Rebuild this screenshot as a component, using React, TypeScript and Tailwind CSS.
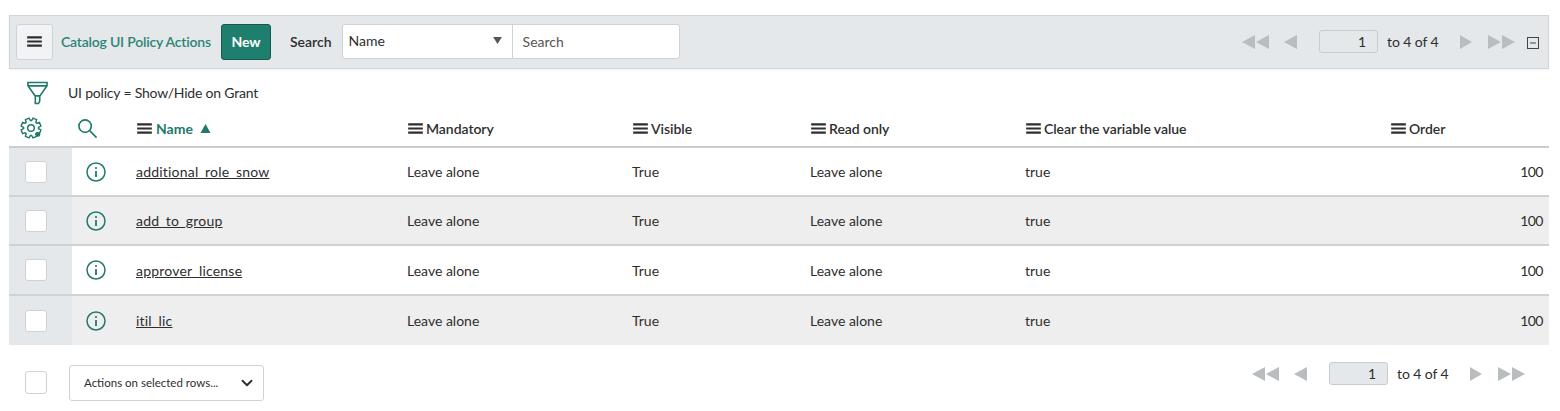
import React from 'react';
import { ChevronDown } from 'lucide-react';

const GRID = 'grid grid-cols-[63px_64px_271px_225px_178px_215px_365px_1fr]';
const GREEN = '#1f7a6b';

const rows = [
  { name: 'additional_role_snow', alt: false, height: 'h-[49px]' },
  { name: 'add_to_group', alt: true, height: 'h-[49px]' },
  { name: 'approver_license', alt: false, height: 'h-[50px]' },
  { name: 'itil_lic', alt: true, height: 'h-[49px]' },
];

// 8 toothed gear outline for the list settings icon
const gearPath = (() => {
  const pts: string[] = [];
  for (let i = 0; i < 8; i++) {
    const a = (i * Math.PI) / 4 - Math.PI / 8;
    [
      [8.2, -0.3],
      [11, -0.2],
      [11, 0.2],
      [8.2, 0.3],
    ].forEach(([r, d]) => {
      const x = 12 + r * Math.cos(a + d);
      const y = 12 + r * Math.sin(a + d);
      pts.push(`${x.toFixed(2)} ${y.toFixed(2)}`);
    });
  }
  return `M${pts.join('L')}Z`;
})();

const Menu = ({ className = '' }: { className?: string }) => (
  <svg viewBox="0 0 16 12" className={className} fill="none" stroke="#2e2e2e" strokeWidth="2.4">
    <path d="M0 1.5h16M0 6h16M0 10.5h16" />
  </svg>
);

const Pager = ({ inputBg, lastGap }: { inputBg: string; lastGap: string }) => (
  <div className="flex items-center">
    <svg viewBox="0 0 28 14" className="w-[28px] h-[14px]" fill="#b9bdbf">
      <path d="M0 7l13-7v14zM14 7l13-7v14z" />
    </svg>
    <svg viewBox="0 0 14 14" className="w-[14px] h-[14px] ml-[14px]" fill="#b9bdbf">
      <path d="M0 7l13-7v14z" />
    </svg>
    <div className={`ml-[21px] w-[59px] h-[23px] rounded-[3px] border border-[#c8ccce] text-right pr-[11px] leading-[21px] text-[14px] text-[#2e2e2e] ${inputBg}`}>
      1
    </div>
    <span className="ml-[9px] text-[14px] text-[#2e2e2e] w-[72px] tracking-[-0.1px]">to 4 of 4</span>
    <svg viewBox="0 0 14 14" className="w-[14px] h-[14px]" fill="#b9bdbf">
      <path d="M1 0l12 7-12 7z" />
    </svg>
    <svg viewBox="0 0 28 14" className={`w-[28px] h-[14px] ${lastGap}`} fill="#b9bdbf">
      <path d="M0 0l13 7-13 7zM14 0l13 7-13 7z" />
    </svg>
  </div>
);

const HeaderCell = ({ label }: { label: string }) => (
  <div className="flex items-center gap-[3px] pl-[1px] text-[14px] font-semibold text-[#2e2e2e] tracking-[-0.05px]">
    <Menu className="w-[15px] h-[11px]" />
    <span>{label}</span>
  </div>
);

export default function App() {
  return (
    <div className="w-[1560px] h-[411px] bg-white overflow-hidden pt-[15px] px-[9px] font-['Lato','Noto_Sans',sans-serif] text-[#2e2e2e]">
      <div className="w-[1540px]">
        {/* top bar */}
        <div className="h-[54px] bg-[#e4e8eb] border border-[#d2d5d7] shadow-[0_1px_2px_rgba(0,0,0,0.06)] flex items-center pl-[6px] pr-[9px] pb-[1px]">
          <button className="w-[37px] h-[36px] bg-[#f2f3f4] border border-[#cfd3d5] rounded-[3px] flex items-center justify-center">
            <Menu className="w-[15px] h-[11px]" />
          </button>
          <span className="ml-[8px] text-[14px] font-semibold text-[#2b8574] w-[152px] whitespace-nowrap tracking-[-0.2px]">
            Catalog UI Policy Actions
          </span>
          <button className="ml-[8px] w-[50px] h-[36px] bg-[#1f7f6e] border border-[#17594e] rounded-[3px] text-white text-[14px] font-bold">
            New
          </button>
          <span className="ml-[19px] text-[14px] font-semibold">Search</span>
          <div className="ml-[10px] mb-[1px] flex h-[35px] w-[338px] bg-white border border-[#cfd3d5] rounded-[3px]">
            <div className="w-[170px] border-r border-[#cfd3d5] flex items-center justify-between pl-[6px] pr-[10px] text-[14px] pb-[2px]">
              <span>Name</span>
              <svg viewBox="0 0 10 8" className="w-[9px] h-[7px]" fill="#555">
                <path d="M0 0h10L5 8z" />
              </svg>
            </div>
            <div className="pl-[10px] flex items-center text-[14px] text-[#555]">Search</div>
          </div>
          <div className="ml-auto flex items-center">
            <Pager inputBg="bg-[#e4e8eb]" lastGap="ml-[15px]" />
            <svg viewBox="0 0 12 12" className="ml-[11px] w-[12px] h-[12px] mt-[2px]" fill="none" stroke="#444">
              <rect x="0.5" y="0.5" width="11" height="11" />
              <path d="M3 6h6" />
            </svg>
          </div>
        </div>

        {/* filter line */}
        <div className="h-[41px] flex items-center pl-[18px] pt-[6px]">
          <svg viewBox="0 0 22 24" className="w-[21px] h-[24px]" fill="none" stroke={GREEN} strokeWidth="1.7">
            <path d="M1 1h20v3.5L13.5 15h-5L1 4.5zM1 4.5h20M8.7 15v8h3.3l1.3-2.5V15" />
          </svg>
          <span className="ml-[20px] text-[14px] tracking-[-0.2px]">UI policy = Show/Hide on Grant</span>
        </div>

        {/* column headers */}
        <div className={`${GRID} h-[38px] items-center border-b-2 border-[#cbcdce]`}>
          <div className="pl-[11px] flex">
            <svg viewBox="0 0 24 24" className="w-[22px] h-[22px]" fill="none" stroke={GREEN} strokeWidth="1.6" strokeLinejoin="round">
              <path d={gearPath} />
              <circle cx="12" cy="12" r="3.6" />
              <circle cx="19.5" cy="19" r="2.6" fill={GREEN} stroke="none" />
            </svg>
          </div>
          <div className="pl-[5px] flex">
            <svg viewBox="0 0 22 22" className="w-[21px] h-[21px]" fill="none" stroke={GREEN} strokeWidth="1.7">
              <circle cx="8.5" cy="8.5" r="6.5" />
              <path d="M13.5 13.5L20.5 20.5" />
            </svg>
          </div>
          <div className="flex items-center gap-[4px] pl-[1px] text-[14px] font-bold text-[#1f7a6b]">
            <Menu className="w-[15px] h-[11px]" />
            <span>Name</span>
            <svg viewBox="0 0 10 9" className="ml-[3px] w-[11px] h-[9px]" fill={GREEN}>
              <path d="M5 0l5 9H0z" />
            </svg>
          </div>
          <HeaderCell label="Mandatory" />
          <HeaderCell label="Visible" />
          <HeaderCell label="Read only" />
          <HeaderCell label="Clear the variable value" />
          <HeaderCell label="Order" />
        </div>

        {/* rows */}
        {rows.map((r, i) => (
          <div
            key={r.name}
            className={`${GRID} ${r.height} items-center text-[14px] ${r.alt ? 'bg-[#eeeeee]' : 'bg-white'} ${i < rows.length - 1 ? 'border-b-2 border-[#d0d2d3]' : ''}`}
          >
            <div className="h-full bg-[#e4e8eb] flex items-center pl-[16px]">
              <div className="w-[22px] h-[22px] bg-white border border-[#cfd3d5] rounded-[3px]" />
            </div>
            <div className="pl-[14px] flex">
              <svg viewBox="0 0 20 20" className="w-[20px] h-[20px]" fill="none" stroke={GREEN} strokeWidth="1.5">
                <circle cx="10" cy="10" r="9" />
                <path d="M10 9v6" strokeWidth="1.8" />
                <circle cx="10" cy="6" r="1.1" fill={GREEN} stroke="none" />
              </svg>
            </div>
            <div className="underline tracking-[0.2px]">{r.name}</div>
            <div>Leave alone</div>
            <div>True</div>
            <div>Leave alone</div>
            <div>true</div>
            <div className="col-start-8 text-right pr-[6px] tracking-[-0.5px]">100</div>
          </div>
        ))}

        {/* footer */}
        <div className="flex items-start pt-[20px] pl-[16px] pr-[23px]">
          <div className="mt-[6px] w-[22px] h-[23px] bg-white border border-[#cfd3d5] rounded-[3px]" />
          <div className="ml-[22px] w-[195px] h-[36px] bg-white border border-[#cfd3d5] rounded-[3px] flex items-center justify-between pl-[14px] pr-[7px] text-[11.5px]">
            <span>Actions on selected rows...</span>
            <ChevronDown className="w-[18px] h-[18px] text-[#2e2e2e]" strokeWidth={2.5} />
          </div>
          <div className="ml-auto -mt-[3px]">
            <Pager inputBg="bg-[#e4e8eb]" lastGap="ml-[15px]" />
          </div>
        </div>
      </div>
    </div>
  );
}
